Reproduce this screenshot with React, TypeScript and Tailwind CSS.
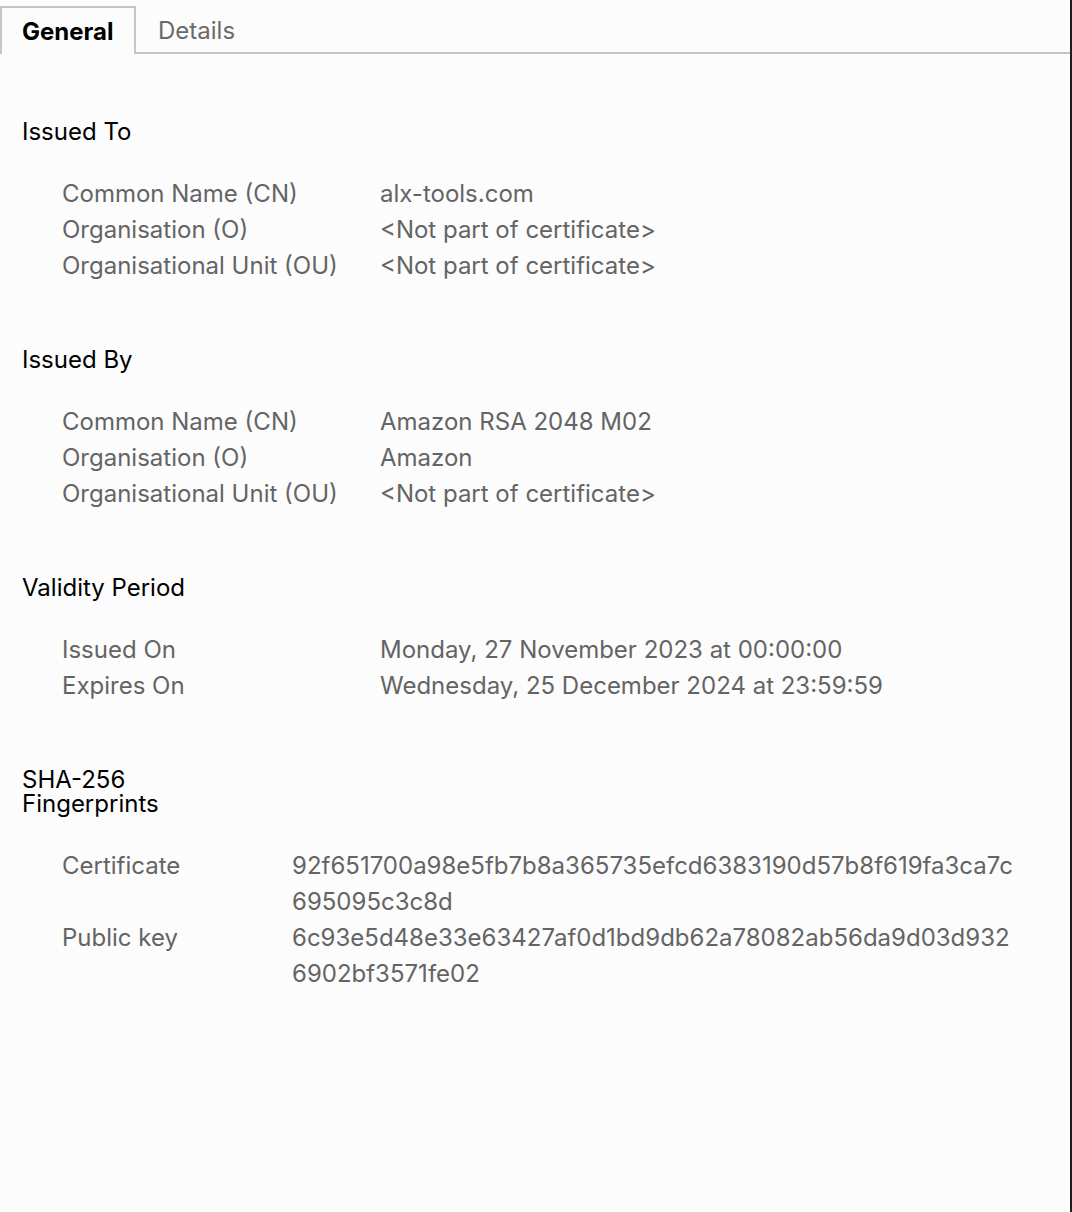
import React from "react";

type Row = { label: string; value: string[] };

interface Section {
  title: string[];
  labelWidth: string;
  rows: Row[];
}

const sections: Section[] = [
  {
    title: ["Issued To"],
    labelWidth: "w-[318px]",
    rows: [
      { label: "Common Name (CN)", value: ["alx-tools.com"] },
      { label: "Organisation (O)", value: ["<Not part of certificate>"] },
      { label: "Organisational Unit (OU)", value: ["<Not part of certificate>"] },
    ],
  },
  {
    title: ["Issued By"],
    labelWidth: "w-[318px]",
    rows: [
      { label: "Common Name (CN)", value: ["Amazon RSA 2048 M02"] },
      { label: "Organisation (O)", value: ["Amazon"] },
      { label: "Organisational Unit (OU)", value: ["<Not part of certificate>"] },
    ],
  },
  {
    title: ["Validity Period"],
    labelWidth: "w-[318px]",
    rows: [
      { label: "Issued On", value: ["Monday, 27 November 2023 at 00:00:00"] },
      { label: "Expires On", value: ["Wednesday, 25 December 2024 at 23:59:59"] },
    ],
  },
  {
    title: ["SHA-256", "Fingerprints"],
    labelWidth: "w-[230px]",
    rows: [
      {
        label: "Certificate",
        value: ["92f651700a98e5fb7b8a365735efcd6383190d57b8f619fa3ca7c", "695095c3c8d"],
      },
      {
        label: "Public key",
        value: ["6c93e5d48e33e63427af0d1bd9db62a78082ab56da9d03d932", "6902bf3571fe02"],
      },
    ],
  },
];

export default function App() {
  return (
    <div
      className="w-[1072px] h-[1212px] bg-[#fcfcfc] flex overflow-hidden"
      style={{ fontFamily: "Inter, 'Noto Sans', sans-serif" }}
    >
      <div className="flex-1 flex flex-col">
        {/* Tabs */}
        <div className="flex items-end pt-[6px]">
          <div className="h-[48px] w-[136px] border-2 border-b-0 border-[#c6c6c6] bg-[#fcfcfc] flex items-center pl-[20px] pt-[2px] text-[24px] font-bold text-black">
            General
          </div>
          <div className="flex-1 h-[48px] border-b-2 border-[#c6c6c6] flex items-center pl-[22px] pt-[4px] text-[24px] text-[#6a6a6a]">
            Details
          </div>
        </div>

        {/* Body */}
        <div className="flex flex-col gap-[64px] pt-[66px] pl-[22px]">
          {sections.map((s) => (
            <div key={s.title.join(" ")} className="flex flex-col gap-[32px]">
              <div className="text-[24px] leading-[24px] text-black">
                {s.title.map((t) => (
                  <div key={t}>{t}</div>
                ))}
              </div>
              <div className="flex flex-col pl-[40px] text-[24px] leading-[36px] text-[#646464]">
                {s.rows.map((r) => (
                  <div key={r.label} className="flex">
                    <div className={`${s.labelWidth} shrink-0`}>{r.label}</div>
                    <div>
                      {r.value.map((v) => (
                        <div key={v}>{v}</div>
                      ))}
                    </div>
                  </div>
                ))}
              </div>
            </div>
          ))}
        </div>
      </div>
      <div className="w-[2px] bg-[#1e1e1e]" />
    </div>
  );
}
